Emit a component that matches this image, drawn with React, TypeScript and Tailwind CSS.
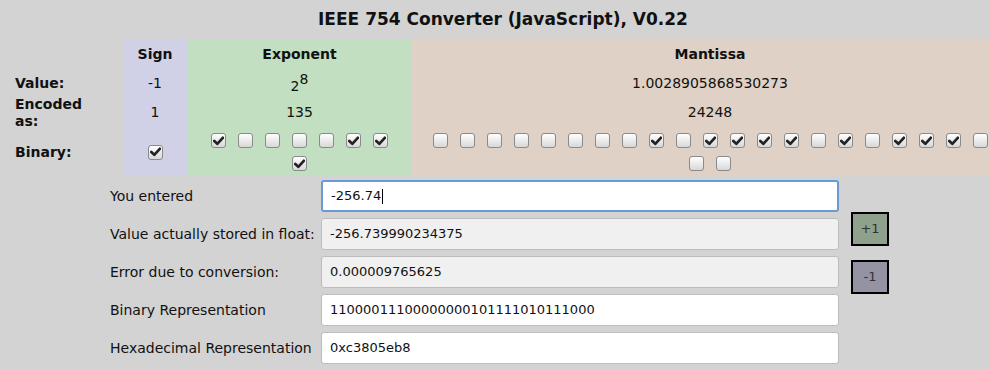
const FONT = { fontFamily: '"DejaVu Sans", Verdana, sans-serif' }

const expBits = [1, 0, 0, 0, 0, 1, 1, 1]
const manBits = [0, 0, 0, 0, 0, 0, 0, 0, 1, 0, 1, 1, 1, 1, 0, 1, 0, 1, 1, 1, 0, 0, 0]

function Box({ on }: { on: boolean }) {
  return (
    <div className="flex h-[23px] w-[27px] items-center justify-center">
      <div className="flex h-[15px] w-[15px] items-center justify-center rounded-[3px] border border-[#8a8a8a] bg-gradient-to-b from-[#ffffff] to-[#d8d8d8]">
        {on && (
          <svg width="11" height="10" viewBox="0 0 11 10">
            <path d="M1.3 5 L4.3 7.8 L9.8 1.8" fill="none" stroke="#222" strokeWidth="2.7" strokeLinecap="round" strokeLinejoin="round" />
          </svg>
        )}
      </div>
    </div>
  )
}

function Field({ label, value, tone, focus }: { label: string; value: string; tone: 'white' | 'grey'; focus?: boolean }) {
  return (
    <div className="flex h-[32px] items-center">
      <div className="w-[211px] text-[14px] text-[#111]">{label}</div>
      <div
        className={
          'flex h-[32px] w-[518px] items-center rounded-[3px] px-[8px] text-[13px] text-[#111] ' +
          (focus
            ? 'border-2 border-[#6a9ad6] bg-white'
            : tone === 'grey'
              ? 'border border-[#bdbdbd] bg-[#f0f0f0]'
              : 'border border-[#bdbdbd] bg-white')
        }
      >
        {value}
        {focus && <span className="ml-px inline-block h-[15px] w-px bg-black" />}
      </div>
    </div>
  )
}

export default function App() {
  return (
    <div className="h-[370px] w-[990px] overflow-hidden bg-[#d3d3d3]" style={FONT}>
      <h1 className="flex h-[39px] items-center justify-center pl-[16px] text-[17px] font-bold text-[#111]">
        IEEE 754 Converter (JavaScript), V0.22
      </h1>

      <div className="grid w-[1008px] grid-cols-[123px_64px_225px_596px] grid-rows-[31px_27px_31px_48px] text-[14px] text-[#111]">
        <div />
        <div className="flex items-center justify-center bg-[#d0d0e6] font-bold">Sign</div>
        <div className="flex items-center justify-center bg-[#c2dfc2] font-bold">Exponent</div>
        <div className="flex items-center justify-center bg-[#dfd1c5] font-bold">Mantissa</div>

        <div className="flex items-center pl-[15px] font-bold">Value:</div>
        <div className="flex items-center justify-center bg-[#d0d0e6]">-1</div>
        <div className="flex items-center justify-center bg-[#c2dfc2]">
          <span className="relative top-[3px]">2</span>
          <span className="relative -top-[4px]">8</span>
        </div>
        <div className="flex items-center justify-center bg-[#dfd1c5]">1.0028905868530273</div>

        <div className="flex flex-col justify-center pl-[15px] font-bold leading-[17px]">
          <span>Encoded</span>
          <span>as:</span>
        </div>
        <div className="flex items-center justify-center bg-[#d0d0e6]">1</div>
        <div className="flex items-center justify-center bg-[#c2dfc2]">135</div>
        <div className="flex items-center justify-center bg-[#dfd1c5]">24248</div>

        <div className="flex items-center pl-[15px] font-bold">Binary:</div>
        <div className="flex items-center justify-center bg-[#d0d0e6]">
          <Box on />
        </div>
        <div className="flex items-center justify-center bg-[#c2dfc2]">
          <div className="flex w-[189px] flex-wrap justify-center">
            {expBits.map((b, i) => (
              <Box key={i} on={b === 1} />
            ))}
          </div>
        </div>
        <div className="flex items-center justify-center bg-[#dfd1c5]">
          <div className="flex w-[567px] flex-wrap justify-center">
            {manBits.map((b, i) => (
              <Box key={i} on={b === 1} />
            ))}
          </div>
        </div>
      </div>

      <div className="ml-[110px] mt-[4px] flex gap-[12px]">
        <div className="flex flex-col gap-[6px]">
          <Field label="You entered" value="-256.74" tone="white" focus />
          <Field label="Value actually stored in float:" value="-256.739990234375" tone="grey" />
          <Field label="Error due to conversion:" value="0.000009765625" tone="grey" />
          <Field label="Binary Representation" value="11000011100000000101111010111000" tone="white" />
          <Field label="Hexadecimal Representation" value="0xc3805eb8" tone="white" />
        </div>
        <div className="flex flex-col gap-[14px] pt-[32px]">
          <button className="flex h-[34px] w-[38px] items-center justify-center border-2 border-black bg-[#8fa08c] text-[13px] text-[#333]">
            +1
          </button>
          <button className="flex h-[34px] w-[38px] items-center justify-center border-2 border-black bg-[#9393a4] text-[13px] text-[#333]">
            -1
          </button>
        </div>
      </div>
    </div>
  )
}
